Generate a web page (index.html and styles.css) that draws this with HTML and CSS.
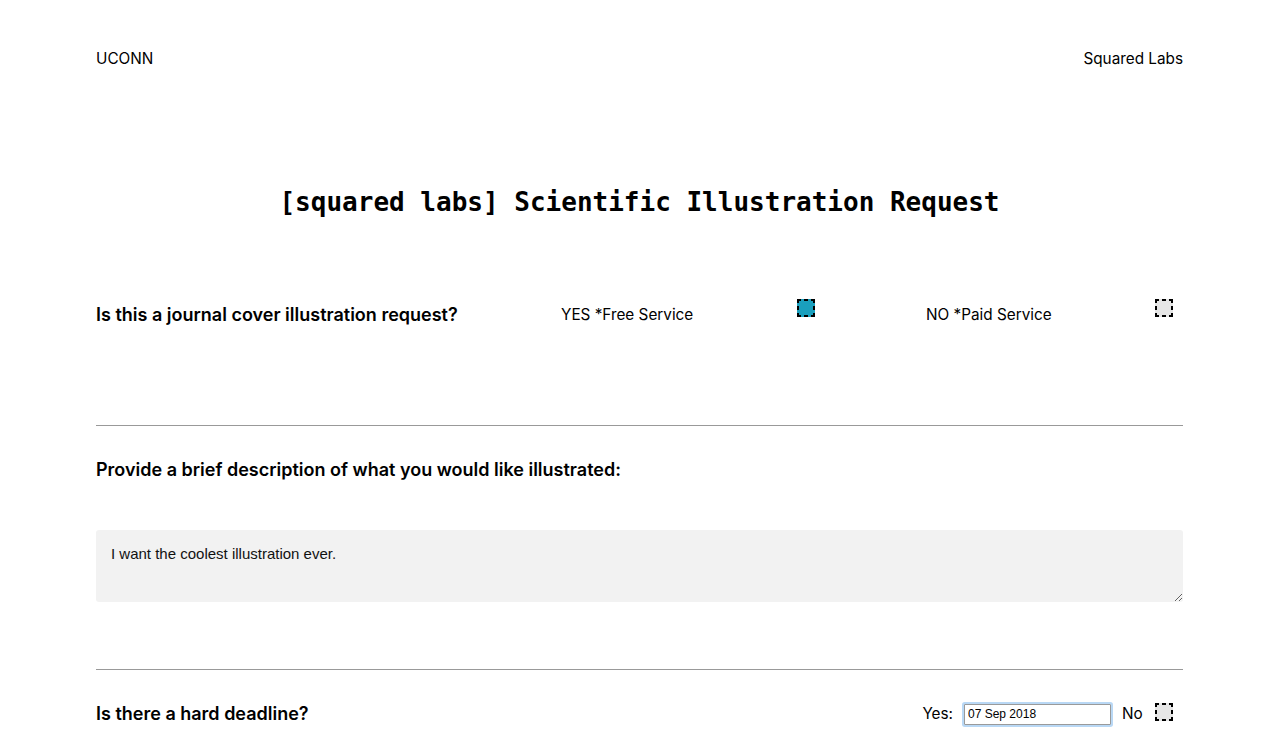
FILE: index.html
```html
<!DOCTYPE html>
<html lang="en">
<head>
<meta charset="utf-8">
<title>Scientific Illustration Request</title>
<link rel="stylesheet" href="styles.css">
</head>
<body>
<div class="page">
  <header class="topbar">
    <span class="brand">UCONN</span>
    <span class="brand">Squared Labs</span>
  </header>

  <h1 class="title">[squared labs] Scientific Illustration Request</h1>

  <section class="row q-row">
    <div class="question">Is this a journal cover illustration request?</div>
    <div class="option opt-yes">
      <span class="opt-label">YES *Free Service</span>
      <span class="check checked"></span>
    </div>
    <div class="option opt-no">
      <span class="opt-label">NO *Paid Service</span>
      <span class="check"></span>
    </div>
  </section>

  <hr class="divider first">

  <section class="desc">
    <div class="question">Provide a brief description of what you would like illustrated:</div>
    <textarea class="desc-box">I want the coolest illustration ever.</textarea>
  </section>

  <hr class="divider second">

  <section class="row deadline-row">
    <div class="question">Is there a hard deadline?</div>
    <div class="deadline-opts">
      <span class="small-label yes-label">Yes:</span>
      <input class="date-input" type="text" value="07 Sep 2018">
      <span class="small-label no-label">No</span>
      <span class="check"></span>
    </div>
  </section>
</div>
</body>
</html>
```

FILE: styles.css
```css
* { box-sizing: border-box; }
html, body { margin: 0; padding: 0; background: #fff; }
body {
  font-family: Inter, "Noto Sans", "Liberation Sans", sans-serif;
  color: #000;
  overflow: hidden;
}
.page {
  padding: 0 97px 0 96px;
}
.topbar {
  display: flex;
  justify-content: space-between;
  padding-top: 49px;
  line-height: 20px;
  font-size: 15.3px;
}
.title {
  margin: 115px 0 0;
  text-align: center;
  font-family: "DejaVu Sans Mono", "Liberation Mono", monospace;
  font-weight: bold;
  font-size: 26px;
  line-height: 36px;
  letter-spacing: 0;
}
.row {
  display: flex;
  align-items: center;
  min-height: 36px;
}
.q-row { margin-top: 77px; }
.question {
  font-size: 18px;
  font-weight: 600;
  line-height: 24px;
}
.q-row .question { width: 465px; }
.option {
  display: flex;
  align-items: center;
}
.opt-label {
  font-size: 15.3px;
  line-height: 24px;
}
.opt-yes .opt-label { width: 236px; }
.opt-no { margin-left: 111px; }
.opt-no .opt-label { width: 229px; }
.check {
  display: inline-block;
  width: 18px;
  height: 18px;
  margin-bottom: 14px;
  background-color: #e6e6e6;
  background-image:
    repeating-linear-gradient(90deg, #000 0 4px, transparent 4px 7px),
    repeating-linear-gradient(90deg, #000 0 4px, transparent 4px 7px),
    repeating-linear-gradient(180deg, #000 0 4px, transparent 4px 7px),
    repeating-linear-gradient(180deg, #000 0 4px, transparent 4px 7px);
  background-size: 18px 2px, 18px 2px, 2px 18px, 2px 18px;
  background-position: left top, left bottom, left top, right top;
  background-repeat: no-repeat;
}
.check.checked { background-color: #1a9fbd; }
.divider {
  border: 0;
  border-top: 1px solid #999;
  margin: 0;
  height: 0;
}
.divider.first { margin-top: 92px; }
.desc { padding-top: 32px; }
.desc-box {
  display: block;
  width: 100%;
  height: 72px;
  margin-top: 48px;
  padding: 15px 15px;
  border: 0;
  border-radius: 3px;
  background: #f2f2f2;
  font-family: "Liberation Sans", Arial, sans-serif;
  font-size: 15px;
  line-height: 18px;
  color: #111;
  resize: vertical;
}
.divider.second { margin-top: 67px; }
.deadline-row { margin-top: 26px; }
.deadline-row .question { flex: 1; }
.deadline-opts {
  display: flex;
  align-items: center;
  padding-right: 10px;
}
.small-label {
  font-size: 15.3px;
  line-height: 24px;
}
.yes-label { margin-right: 2px; }
.date-input {
  width: 147px;
  height: 21px;
  margin-left: 9px;
  padding: 1px 3px;
  border: 1px solid #9a9a9a;
  border-radius: 1px;
  box-shadow: 0 0 0 2px #b9d8f5;
  font-family: "Liberation Sans", Arial, sans-serif;
  font-size: 12px;
  color: #000;
  outline: none;
}
.no-label { margin-left: 11px; width: 33px; }
.deadline-row .check { margin-bottom: 4px; }
```
